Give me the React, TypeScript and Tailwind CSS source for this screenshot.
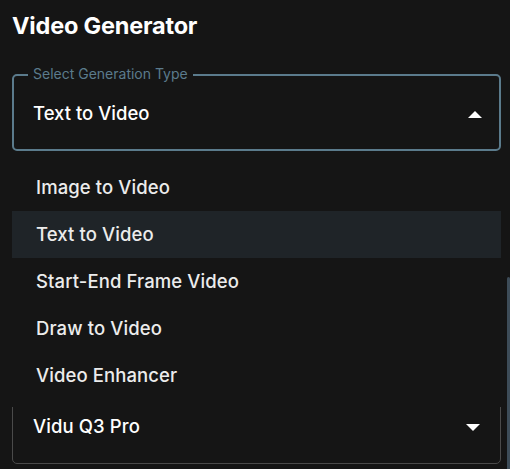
import React from 'react'

const types = ['Image to Video', 'Text to Video', 'Start-End Frame Video', 'Draw to Video', 'Video Enhancer']

function Caret({ up }: { up?: boolean }) {
  return (
    <svg width="14" height="7" viewBox="0 0 14 7" className="fill-white">
      {up ? <path d="M0 7L7 0l7 7z" /> : <path d="M0 0l7 7 7-7z" />}
    </svg>
  )
}

export default function App() {
  return (
    <div className="relative h-screen overflow-hidden bg-[#151515] pl-3 pr-[9px] pt-[12px] font-['Inter',sans-serif] text-white">
      <h1 className="text-[23.5px] font-bold leading-[28px] tracking-[-0.2px]">Video Generator</h1>

      <div className="relative mt-[34px] flex h-[77px] items-center justify-between rounded-[5px] border-2 border-[#5b7b8c] pl-[19px] pr-[17px] pt-[3px]">
        <span className="absolute -top-[11px] left-[14px] bg-[#151515] px-[5px] text-[14px] leading-[18px] text-[#5b7b8c]">
          Select Generation Type
        </span>
        <span className="text-[18.5px] font-medium">Text to Video</span>
        <Caret up />
      </div>

      <div className="mt-[236px] flex h-[77px] items-center justify-between rounded-[5px] border border-[#4a4a4a] pl-5 pr-[20px] pt-[3px]">
        <span className="text-[18.5px] font-medium tracking-[0.1px]">Vidu Q3 Pro</span>
        <Caret />
      </div>

      <div className="absolute left-3 top-[156px] w-[489px] bg-[#151515] py-2">
        {types.map((t) => (
          <div
            key={t}
            className={`flex h-[47px] items-center px-6 text-[18.5px] font-medium tracking-[0.1px] text-[#ececec] ${t === 'Text to Video' ? 'bg-[#1f2428]' : ''}`}
          >
            {t}
          </div>
        ))}
      </div>

      <div className="absolute right-0 top-[277px] bottom-0 w-[3px] rounded-t-full bg-[#3d4c58]" />
    </div>
  )
}
